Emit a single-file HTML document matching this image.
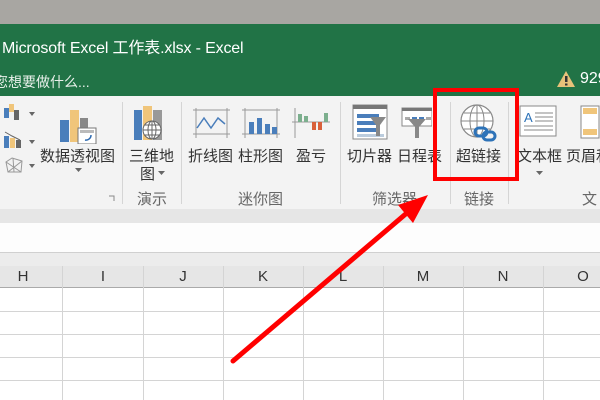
<!DOCTYPE html>
<html><head><meta charset="utf-8"><style>
*{margin:0;padding:0;box-sizing:border-box}
body{width:600px;height:400px;overflow:hidden;position:relative;background:#fff;font-family:"Liberation Sans","Noto Sans CJK SC",sans-serif}
.a{position:absolute}
.t{position:absolute;font-size:15px;color:#333;white-space:nowrap}
.g{position:absolute;font-size:15px;color:#666;white-space:nowrap;top:188px}
.sep{position:absolute;top:102px;width:1px;height:102px;background:#d5d5d5}
.col{position:absolute;top:266px;width:1px;height:134px;background:#d4d4d4}
.row{position:absolute;left:0;width:600px;height:1px;background:#d4d4d4}
.ch{position:absolute;top:268px;font-size:15px;color:#333;width:40px;text-align:center}
</style></head><body>
<div class="a" style="left:0;top:0;width:600px;height:24px;background:#a8a6a2"></div>
<div class="a" style="left:0;top:24px;width:600px;height:72px;background:#217346"></div>
<div class="t" style="left:2px;top:34px;font-size:16px;color:#fff;letter-spacing:-0.15px">Microsoft Excel 工作表.xlsx - Excel</div>
<div class="t" style="left:-6px;top:72px;font-size:14px;color:#e8f0ea">您想要做什么...</div>
<svg class="a" style="left:556px;top:70px" width="20" height="18"><polygon points="10,1 19,17 1,17" fill="#e8c27a"/><rect x="9" y="6" width="2.5" height="6" fill="#333"/><rect x="9" y="13.5" width="2.5" height="2" fill="#333"/></svg>
<div class="t" style="left:580px;top:70px;font-size:16px;color:#fff">929</div>
<div class="a" style="left:0;top:96px;width:600px;height:113px;background:#f3f3f3"></div>
<div class="a" style="left:0;top:209px;width:600px;height:14px;background:#e6e6e6"></div>
<div class="a" style="left:0;top:223px;width:600px;height:30px;background:#fdfdfd;border-bottom:1px solid #d0d0d0"></div>
<div class="a" style="left:0;top:253px;width:600px;height:13px;background:#ececec"></div>
<div class="a" style="left:0;top:266px;width:600px;height:22px;background:#e6e6e6;border-bottom:1px solid #aaa"></div>
<svg class="a" style="left:2px;top:100px" width="36" height="80">
<rect x="2" y="8" width="5" height="10" fill="#4a7ebb"/><rect x="7" y="4" width="5" height="8" fill="#f0c57a"/><rect x="12" y="10" width="5" height="10" fill="#666"/>
<polygon points="27,12 33,12 30,16" fill="#666"/>
<rect x="2" y="36" width="5" height="12" fill="#4a7ebb"/><rect x="8" y="38" width="5" height="10" fill="#f0c57a"/><rect x="14" y="40" width="5" height="8" fill="#666"/>
<polyline points="3,32 10,36 18,40" stroke="#666" fill="none"/>
<polygon points="27,40 33,40 30,44" fill="#666"/>
<polygon points="10,58 20,61 19,72 6,72 4,62" stroke="#999" fill="none"/>
<path d="M11 58 L12 72 M4 62 L19 72 M20 61 L6 72" stroke="#999"/>
<polygon points="27,64 33,64 30,68" fill="#666"/>
</svg>
<svg class="a" style="left:58px;top:104px" width="42" height="40">
<rect x="2" y="16" width="9" height="22" fill="#4a7ebb"/><rect x="12" y="6" width="9" height="32" fill="#f0c57a"/><rect x="22" y="14" width="8" height="12" fill="#888"/>
<rect x="20" y="24" width="18" height="16" fill="#fff" stroke="#777"/><rect x="22" y="26" width="14" height="3" fill="#bbb"/>
<path d="M27 36 A5 5 0 0 0 33 31" stroke="#2d6ab0" stroke-width="1.5" fill="none"/>
</svg>
<div class="t" style="left:40px;top:145px">数据透视图</div>
<svg class="a" style="left:75px;top:168px" width="8" height="5"><polygon points="0,0 7,0 3.5,4" fill="#666"/></svg>
<svg class="a" style="left:108px;top:195px" width="8" height="8"><path d="M1 1 H6 V6" stroke="#888" fill="none"/></svg>
<div class="sep" style="left:122px"></div>
<svg class="a" style="left:133px;top:104px" width="36" height="36">
<rect x="1" y="6" width="8" height="30" fill="#4a7ebb"/><rect x="10" y="2" width="9" height="34" fill="#f0c57a"/><rect x="20" y="6" width="9" height="30" fill="#999"/>
<circle cx="19" cy="26" r="9" fill="#fff" stroke="#666"/><path d="M10 26 H28 M19 17 V35 M12 21 H26 M12 31 H26" stroke="#666"/><ellipse cx="19" cy="26" rx="4" ry="9" stroke="#666" fill="none"/>
</svg>
<div class="t" style="left:129px;top:145px">三维地</div>
<div class="t" style="left:140px;top:163px">图</div>
<svg class="a" style="left:158px;top:171px" width="8" height="5"><polygon points="0,0 7,0 3.5,4" fill="#666"/></svg>
<div class="g" style="left:137px">演示</div>
<div class="sep" style="left:181px"></div>
<svg class="a" style="left:192px;top:108px" width="140" height="30">
<path d="M1 2 H38 M1 26 H38 M4 0 V30 M35 0 V30" stroke="#999"/>
<polyline points="5,20 12,10 19,20 26,10 33,16" stroke="#4a7ebb" stroke-width="1.5" fill="none"/>
<path d="M50 2 H88 M50 26 H88 M53 0 V30 M85 0 V30" stroke="#999"/>
<rect x="57" y="14" width="5" height="12" fill="#4a7ebb"/><rect x="65" y="10" width="5" height="16" fill="#4a7ebb"/><rect x="73" y="16" width="5" height="10" fill="#4a7ebb"/><rect x="80" y="19" width="5" height="7" fill="#4a7ebb"/>
<path d="M100 14 H138 M103 0 V30" stroke="#999"/>
<rect x="106" y="6" width="4" height="8" fill="#7caf8e"/><rect x="112" y="8" width="4" height="6" fill="#7caf8e"/><rect x="120" y="14" width="4" height="8" fill="#d9603a"/><rect x="126" y="14" width="4" height="8" fill="#d9603a"/><rect x="132" y="5" width="4" height="9" fill="#7caf8e"/>
</svg>
<div class="t" style="left:188px;top:145px">折线图</div>
<div class="t" style="left:238px;top:145px">柱形图</div>
<div class="t" style="left:296px;top:145px">盈亏</div>
<div class="g" style="left:238px">迷你图</div>
<div class="sep" style="left:340px"></div>
<svg class="a" style="left:352px;top:104px" width="80" height="36">
<rect x="1" y="1" width="34" height="34" fill="#fff" stroke="#888"/><rect x="1" y="1" width="34" height="4" fill="#777"/>
<rect x="5" y="10" width="22" height="4" fill="#4a7ebb"/><rect x="5" y="17" width="22" height="4" fill="#4a7ebb"/><rect x="5" y="24" width="22" height="4" fill="#4a7ebb"/><rect x="5" y="30" width="27" height="3" fill="#bcd"/>
<polygon points="18,13 34,13 28,21 28,32 24,32 24,21" fill="#888"/>
<rect x="50" y="4" width="30" height="18" fill="#fff" stroke="#888"/><rect x="50" y="4" width="30" height="3" fill="#777"/>
<rect x="53" y="13" width="5" height="3" fill="#aaa"/><rect x="60" y="13" width="5" height="3" fill="#4a7ebb"/><rect x="67" y="13" width="5" height="3" fill="#4a7ebb"/><rect x="74" y="13" width="5" height="3" fill="#aaa"/>
<polygon points="56,15 74,15 67,23 67,34 63,34 63,23" fill="#888"/>
</svg>
<div class="t" style="left:347px;top:145px">切片器</div>
<div class="t" style="left:397px;top:145px">日程表</div>
<div class="g" style="left:372px">筛选器</div>
<div class="sep" style="left:450px"></div>
<svg class="a" style="left:459px;top:103px" width="42" height="40">
<circle cx="18" cy="18" r="16" fill="#fff" stroke="#888" stroke-width="1.2"/>
<ellipse cx="18" cy="18" rx="7" ry="16" fill="none" stroke="#888"/>
<path d="M2 18 H34 M18 2 V34 M5 10 H31 M5 26 H31" stroke="#888"/>
<rect x="16" y="25" width="12" height="8" rx="4" fill="none" stroke="#2e73b8" stroke-width="3"/>
<rect x="24" y="29" width="12" height="8" rx="4" fill="none" stroke="#2e73b8" stroke-width="3"/>
</svg>
<div class="t" style="left:456px;top:145px">超链接</div>
<div class="g" style="left:464px">链接</div>
<div class="sep" style="left:508px"></div>
<svg class="a" style="left:519px;top:105px" width="81" height="34">
<rect x="1" y="1" width="36" height="30" fill="#fff" stroke="#888"/>
<text x="5" y="17" font-size="13" fill="#2e73b8" font-family="Liberation Sans">A</text>
<path d="M16 8 H34 M16 12 H34 M16 16 H34 M5 21 H34 M5 25 H34" stroke="#888"/>
<rect x="62" y="1" width="18" height="32" fill="#fff" stroke="#888"/><rect x="64" y="3" width="14" height="6" fill="#f0c57a"/><rect x="64" y="24" width="14" height="6" fill="#f0c57a"/>
</svg>
<div class="t" style="left:517px;top:145px">文本框</div>
<div class="t" style="left:566px;top:145px">页眉和</div>
<svg class="a" style="left:536px;top:171px" width="8" height="5"><polygon points="0,0 7,0 3.5,4" fill="#666"/></svg>
<div class="g" style="left:582px">文</div>
<div class="col" style="left:62px"></div><div class="col" style="left:143px"></div><div class="col" style="left:223px"></div><div class="col" style="left:303px"></div><div class="col" style="left:383px"></div><div class="col" style="left:463px"></div><div class="col" style="left:543px"></div>
<div class="row" style="top:311px"></div><div class="row" style="top:334px"></div><div class="row" style="top:357px"></div><div class="row" style="top:380px"></div>
<div class="ch" style="left:3px">H</div><div class="ch" style="left:83px">I</div><div class="ch" style="left:163px">J</div><div class="ch" style="left:243px">K</div><div class="ch" style="left:323px">L</div><div class="ch" style="left:403px">M</div><div class="ch" style="left:483px">N</div><div class="ch" style="left:563px">O</div>
<div class="a" style="left:433px;top:88px;width:86px;height:93px;border:4px solid #f00"></div>
<svg class="a" style="left:0;top:0" width="600" height="400">
<line x1="233" y1="361" x2="408" y2="212" stroke="#f00" stroke-width="5" stroke-linecap="round"/>
<polygon points="428,195 398,205 413,223" fill="#f00"/>
</svg>
</body></html>
